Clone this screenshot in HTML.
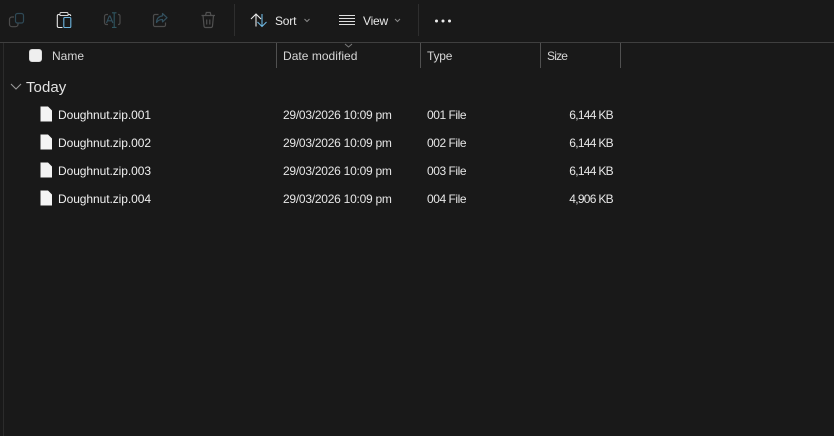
<!DOCTYPE html>
<html>
<head>
<meta charset="utf-8">
<style>
html,body{margin:0;padding:0;background:#191919;}
body{width:834px;height:436px;overflow:hidden;position:relative;font-family:"Liberation Sans",sans-serif;color:#e6e6e6;}
.t{position:absolute;white-space:nowrap;font-size:12px;line-height:16px;letter-spacing:-.2px;}
.h{color:#d6d6d6;}
.n{letter-spacing:-.07px;color:#f0f0f0;left:58px;}
.d{letter-spacing:-.25px;left:283px;}
.y{letter-spacing:-.45px;left:427px;}
.s{letter-spacing:-.7px;right:221px;}
.line{position:absolute;background:#4a4a4a;}
svg{position:absolute;left:0;top:0;}
</style>
</head>
<body>
<svg width="834" height="436" viewBox="0 0 834 436" fill="none">
  <!-- left edge -->
  <rect x="3" y="43" width="1" height="393" fill="#2b2b2b"/>
  <!-- copy -->
  <rect x="15.500" y="13.500" width="8" height="9.500" rx="2" stroke="#2f4a57" stroke-width="1.200"/>
  <path d="M14 17h-2a2.500 2.500 0 0 0-2.500 2.500v4.700a2.500 2.500 0 0 0 2.500 2.500h3.500a2.500 2.500 0 0 0 2.500-2.500v-.7" stroke="#4c4c4c" stroke-width="1.200"/>
  <!-- paste -->
  <path d="M60 14.500h-1.200a1.500 1.500 0 0 0-1.500 1.500v10a1.500 1.500 0 0 0 1.500 1.500h3.700" stroke="#e8e8e8" stroke-width="1.100"/>
  <path d="M68 14.500h1.200a1.500 1.500 0 0 1 1.500 1.500" stroke="#e8e8e8" stroke-width="1.100"/>
  <path d="M60 15.500v-2a1 1 0 0 1 1-1h6a1 1 0 0 1 1 1v2z" stroke="#d4d4d4" stroke-width=".9"/>
  <rect x="63.800" y="17.500" width="7" height="10" rx="1" stroke="#6db6e0" stroke-width="1.100"/>
  <!-- rename -->
  <path d="M108 14.500h-1.500a2 2 0 0 0-2 2v6a2 2 0 0 0 2 2h1.500M118 14.500h.5a1.500 1.500 0 0 1 1.500 1.500v7a1.500 1.500 0 0 1-1.500 1.500h-.5" stroke="#4a4a4a" stroke-width="1.200"/>
  <path d="M112 12.800h4.500M114.200 12.800v14.600M112 27.400h4.500" stroke="#2f5560" stroke-width="1.100"/>
  <path d="M106.500 23l2.800-7h.8l2.800 7M107.700 20.800h4" stroke="#33505e" stroke-width="1.100"/>
  <!-- share -->
  <path d="M158.500 14.500h-3.500a1.500 1.500 0 0 0-1.500 1.500v9a1.500 1.500 0 0 0 1.500 1.500h9a1.500 1.500 0 0 0 1.500-1.500v-2.500" stroke="#4c4c4c" stroke-width="1.200"/>
  <path d="M162.500 13.500l4.500 4.200-4.500 4.200v-2.400c-3 0-4.500.8-6 3 .2-4 2.500-6.200 6-6.600z" stroke="#33505e" stroke-width="1.200" stroke-linejoin="round"/>
  <!-- delete -->
  <path d="M201.500 15.500h13.500M205.500 15.500l.8-3h3.900l.8 3M203 15.500l1 10.500a1.500 1.500 0 0 0 1.500 1.500h5.500a1.500 1.500 0 0 0 1.500-1.500l1-10.500M206.700 19.500v5M209.800 19.500v5" stroke="#505050" stroke-width="1.200"/>
  <!-- toolbar separators -->
  <rect x="234" y="4" width="1" height="32" fill="#2e2e2e"/>
  <rect x="418" y="4" width="1" height="32" fill="#2e2e2e"/>
  <!-- sort -->
  <path d="M256 26.500V14M251 19L256 14l5 5" stroke="#e8e8e8" stroke-width="1.100"/>
  <path d="M262 14v12.500M257.500 22l4.500 4.500 4.500-4.500" stroke="#6db6e0" stroke-width="1.100"/>
  <path d="M304.500 19l2.500 2.500 2.500-2.500" stroke="#8a8a8a" stroke-width="1"/>
  <!-- view -->
  <path d="M339 15.500h16M339 18.500h16M339 21.500h16M339 24.500h16" stroke="#dedede" stroke-width="1"/>
  <path d="M395 19l2.500 2.500 2.500-2.500" stroke="#8a8a8a" stroke-width="1"/>
  <!-- more -->
  <circle cx="436.500" cy="21" r="1.500" fill="#ececec"/>
  <circle cx="443" cy="21" r="1.500" fill="#ececec"/>
  <circle cx="449.500" cy="21" r="1.500" fill="#ececec"/>
  <!-- header sort chevron -->
  <path d="M345 44l3.500 3 3.500-3" stroke="#7a7a7a" stroke-width="1"/>
  <!-- checkbox -->
  <rect x="29.500" y="49.500" width="12" height="12" rx="2.500" fill="#efefef" stroke="#dcdcdc"/>
  <!-- group chevron -->
  <path d="M11 84l5 5 5-5" stroke="#9a9a9a" stroke-width="1.100"/>
  <!-- file icons -->
  <g fill="#f4f4f4">
    <path d="M40.500 106.500h7.500l4 4v11h-11.500z"/>
    <path d="M40.500 134.500h7.500l4 4v11h-11.500z"/>
    <path d="M40.500 162.500h7.500l4 4v11h-11.500z"/>
    <path d="M40.500 190.500h7.500l4 4v11h-11.500z"/>
  </g>
</svg>

<div class="line" style="left:0;top:42px;width:834px;height:1px;background:#3f3f3f"></div>
<div class="line" style="left:276px;top:43px;width:1px;height:25px;background:#505050"></div>
<div class="line" style="left:420px;top:43px;width:1px;height:25px;background:#505050"></div>
<div class="line" style="left:540px;top:43px;width:1px;height:25px;background:#505050"></div>
<div class="line" style="left:620px;top:43px;width:1px;height:25px;background:#505050"></div>

<div class="t" style="left:275px;top:13px;color:#e8e8e8">Sort</div>
<div class="t" style="left:363px;top:13px;color:#e8e8e8">View</div>

<div class="t h" style="left:52px;top:48px;letter-spacing:0">Name</div>
<div class="t h" style="left:283px;top:48px;letter-spacing:.03px">Date modified</div>
<div class="t h" style="left:427px;top:48px">Type</div>
<div class="t h" style="left:547px;top:48px;letter-spacing:-.8px">Size</div>

<div class="t" style="left:26px;top:79px;font-size:15px;line-height:18px;letter-spacing:.05px;color:#e2e2e2">Today</div>

<div class="t n" style="top:107px">Doughnut.zip.001</div>
<div class="t d" style="top:107px">29/03/2026 10:09 pm</div>
<div class="t y" style="top:107px">001 File</div>
<div class="t s" style="top:107px">6,144 KB</div>

<div class="t n" style="top:135px">Doughnut.zip.002</div>
<div class="t d" style="top:135px">29/03/2026 10:09 pm</div>
<div class="t y" style="top:135px">002 File</div>
<div class="t s" style="top:135px">6,144 KB</div>

<div class="t n" style="top:163px">Doughnut.zip.003</div>
<div class="t d" style="top:163px">29/03/2026 10:09 pm</div>
<div class="t y" style="top:163px">003 File</div>
<div class="t s" style="top:163px">6,144 KB</div>

<div class="t n" style="top:191px">Doughnut.zip.004</div>
<div class="t d" style="top:191px">29/03/2026 10:09 pm</div>
<div class="t y" style="top:191px">004 File</div>
<div class="t s" style="top:191px">4,906 KB</div>
</body>
</html>
